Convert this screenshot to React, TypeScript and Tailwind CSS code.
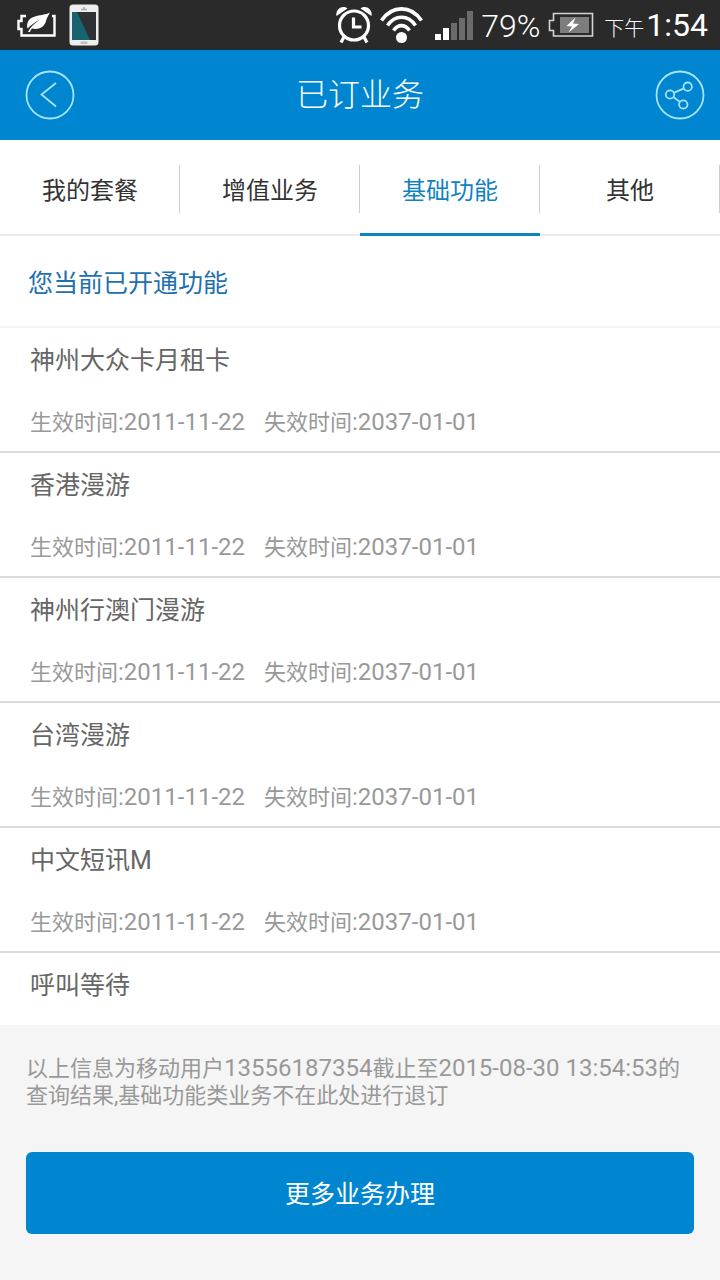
import { useState, type ReactNode } from 'react';

const TABS = ['我的套餐', '增值业务', '基础功能', '其他'];

type Service = {
  name: string;
  start?: string;
  end?: string;
};

const SERVICES: Service[] = [
  { name: '神州大众卡月租卡', start: '2011-11-22', end: '2037-01-01' },
  { name: '香港漫游', start: '2011-11-22', end: '2037-01-01' },
  { name: '神州行澳门漫游', start: '2011-11-22', end: '2037-01-01' },
  { name: '台湾漫游', start: '2011-11-22', end: '2037-01-01' },
  { name: '中文短讯M', start: '2011-11-22', end: '2037-01-01' },
  { name: '呼叫等待' },
];

export default function App() {
  const [active, setActive] = useState(2);

  return (
    <div className="flex min-h-screen flex-col bg-white font-[Roboto,'Noto_Sans_CJK_SC',sans-serif]">
      <StatusBar />

      {/* Title bar */}
      <header className="grid h-[90px] grid-cols-[1fr_auto_1fr] items-center bg-[#0085d0] px-[15px]">
        <button type="button" aria-label="返回" className="ml-2.5 justify-self-start">
          <BackIcon />
        </button>
        <h1 className="text-[32px] leading-10 font-light text-white">已订业务</h1>
        <button type="button" aria-label="分享" className="justify-self-end">
          <ShareIcon />
        </button>
      </header>

      {/* Tabs */}
      <nav className="grid h-24 grid-cols-4 border-b-2 border-[#ebebeb]">
        {TABS.map((tab, i) => (
          <button
            key={tab}
            type="button"
            onClick={() => setActive(i)}
            className={`relative flex items-center justify-center pt-2 text-2xl ${
              i === active ? 'text-[#0f82c3]' : 'text-[#333333]'
            }`}
          >
            {tab}
            <span className="absolute top-[25px] right-0 h-12 w-px bg-[#cccccc]" />
            {i === active && (
              <span className="absolute inset-x-0 -bottom-0.5 h-[3px] bg-[#0f82c3]" />
            )}
          </button>
        ))}
      </nav>

      <main className="flex-1">
        <h2 className="border-b-2 border-[#f5f5f5] px-7 pt-8 pb-[26px] text-[25px] leading-8 text-[#1f70af]">
          您当前已开通功能
        </h2>
        <ul>
          {SERVICES.map((service) => (
            <ServiceRow key={service.name} service={service} />
          ))}
        </ul>
      </main>

      <footer className="bg-[#f5f5f5] px-[26px] pt-[30px] pb-[46px]">
        <p className="text-[22px] leading-[27px] text-[#999999]">
          以上信息为移动用户<Digits>13556187354</Digits>截止至
          <Digits>2015-08-30 13:54:53</Digits>的<br />
          查询结果,基础功能类业务不在此处进行退订
        </p>
        <button
          type="button"
          className="mt-[43px] h-[82px] w-full rounded-md bg-[#0085d0] pt-1 text-[25px] text-white"
        >
          更多业务办理
        </button>
      </footer>
    </div>
  );
}

function Digits({ children }: { children: ReactNode }) {
  return <span className="text-[24px] leading-none">{children}</span>;
}

function ServiceRow({ service }: { service: Service }) {
  return (
    <li className="border-b-2 border-[#dcdcdc] px-[30px] pt-[17px] pb-3 last:border-b-0 last:pb-5">
      <h3 className="text-[25px] leading-8 text-[#666666]">{service.name}</h3>
      {service.start && (
        <p className="mt-[30px] flex gap-[19px] text-[22px] leading-8 text-[#999999]">
          <span>
            生效时间<Digits>:{service.start}</Digits>
          </span>
          <span>
            失效时间<Digits>:{service.end}</Digits>
          </span>
        </p>
      )}
    </li>
  );
}

function StatusBar() {
  return (
    <div className="flex h-[50px] items-center justify-between border-b border-[#14303f] bg-[#2a2a2a] pr-3 pl-4 text-white">
      <div className="flex items-center gap-3">
        <LeafBatteryIcon />
        <PhoneIcon />
      </div>
      <div className="flex items-center">
        <AlarmIcon />
        <WifiIcon />
        <SignalIcon />
        <span className="ml-2 pt-0.5 text-[32px] leading-10 font-light">79%</span>
        <ChargingIcon />
        <span className="ml-2.5 flex items-baseline pt-1 leading-10">
          <span className="text-[20px] font-light">下午</span>
          <span className="ml-0.5 text-[32px]">1:54</span>
        </span>
      </div>
    </div>
  );
}

function LeafBatteryIcon() {
  return (
    <svg width="41" height="30" viewBox="0 0 41 30" fill="none" aria-hidden="true">
      <path
        d="M10 6H5.500V11H2.500V19H5.500V25.500H38.500V6H36"
        stroke="#fff"
        strokeWidth="2.400"
      />
      <path
        d="M34 2.500C30 5 24 4.500 17.500 7C11 9.500 10.500 15 11.500 18.500C15 15 19 12 24 9.500C19 13 14.500 16.500 12 22L14 22C14.500 20.500 15 19.500 16 18.500C24 20.500 29 15.500 30 11C31 7.500 32.500 5 34 2.500Z"
        fill="#fff"
      />
    </svg>
  );
}

function PhoneIcon() {
  return (
    <svg width="30" height="42" viewBox="0 0 30 42" aria-hidden="true">
      <rect x="0.500" y="0.500" width="29" height="41" rx="3.500" fill="#eeeeee" />
      <rect x="3" y="8" width="24" height="28" fill="#2d3133" />
      <path d="M3 8H8L21 36H3Z" fill="#17636f" />
      <path d="M12 5.500H18M15 3V5" stroke="#aaa" strokeWidth="1.500" />
      <rect x="11.500" y="37.500" width="7" height="2.500" rx="1" fill="#bbb" />
    </svg>
  );
}

function AlarmIcon() {
  return (
    <svg width="36" height="38" viewBox="0 0 36 38" fill="none" aria-hidden="true">
      <circle cx="18" cy="19.500" r="14.500" stroke="#fff" strokeWidth="3.200" />
      <path d="M17.500 11.500V21H25.500" stroke="#fff" strokeWidth="3.200" />
      <path d="M8 31L5 36.500M28 31L31 36.500" stroke="#fff" strokeWidth="3.200" />
      <path
        d="M0.500 10C-1 4 6 -2 11.500 2.500ZM35.500 10C37 4 30 -2 24.500 2.500Z"
        fill="#fff"
      />
    </svg>
  );
}

function WifiIcon() {
  return (
    <svg className="ml-2" width="43" height="38" viewBox="0 0 43 38" fill="none" aria-hidden="true">
      <circle cx="21.500" cy="31.500" r="5.500" fill="#fff" />
      <path
        d="M1.500 14.500C12 -1 31 -1 41.500 14.500M7.500 19.500C15 8.500 28 8.500 35.500 19.500M13.500 24.500C18 18 25 18 29.500 24.500"
        stroke="#fff"
        strokeWidth="3.600"
      />
    </svg>
  );
}

function SignalIcon() {
  return (
    <svg className="ml-3" width="38" height="30" viewBox="0 0 38 30" aria-hidden="true">
      <path d="M0 24H6V30H0ZM8 18H14V30H8Z" fill="#fff" />
      <path d="M16 13H22V30H16ZM24 8H30V30H24ZM32 1H38V30H32Z" fill="#6b6b6b" />
    </svg>
  );
}

function ChargingIcon() {
  return (
    <svg className="ml-2" width="46" height="26" viewBox="0 0 46 26" fill="none" aria-hidden="true">
      <path d="M5.500 1.500H44.500V24H5.500V18.500H1.500V8.500H5.500Z" stroke="#d4d4d4" strokeWidth="1.600" />
      <rect x="12" y="5" width="29" height="16" fill="#7d7d7d" />
      <path d="M27.500 5.500L18.500 14L24 14.500L20.500 20.500L31 12L25 11.500Z" fill="#fff" />
    </svg>
  );
}

function BackIcon() {
  return (
    <svg width="50" height="50" viewBox="0 0 50 50" fill="none" stroke="#a5e4fc" aria-hidden="true">
      <circle cx="25" cy="25" r="23.500" strokeWidth="1.800" />
      <path d="M31 13L16.500 24.500L31 36.500" strokeWidth="1.800" />
    </svg>
  );
}

function ShareIcon() {
  return (
    <svg width="50" height="50" viewBox="0 0 50 50" fill="none" stroke="#a5e4fc" strokeWidth="1.800" aria-hidden="true">
      <circle cx="25" cy="25" r="23.500" />
      <circle cx="15" cy="24.500" r="4.200" />
      <circle cx="32.700" cy="16.700" r="4.200" />
      <circle cx="28.300" cy="34.500" r="4.200" />
      <path d="M18.800 22.800L28.900 18.400M18.300 27L25 32" />
    </svg>
  );
}
